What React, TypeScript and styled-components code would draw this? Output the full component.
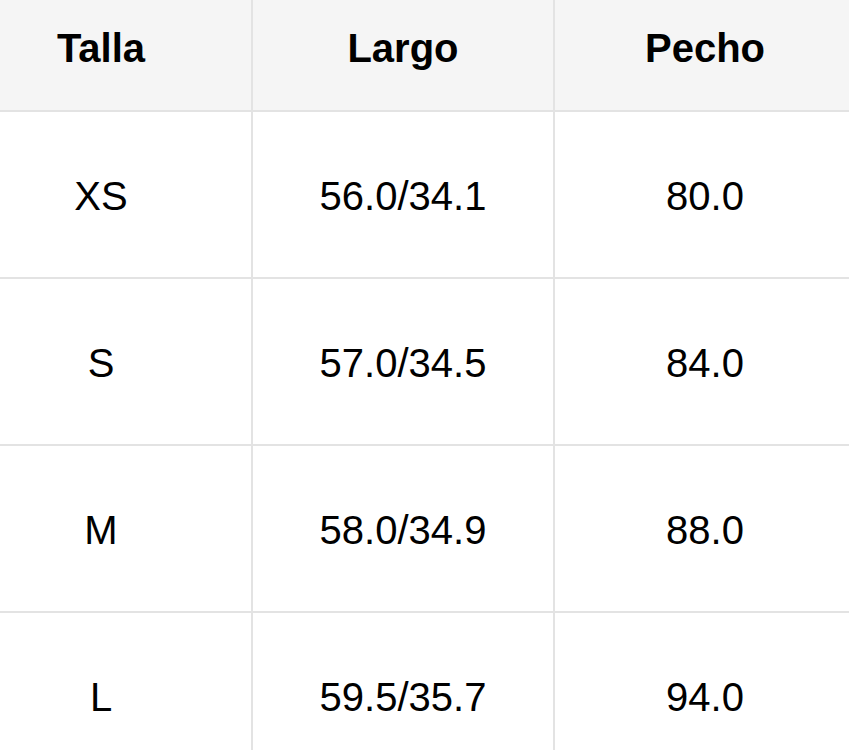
import React from "react";
import styled, { createGlobalStyle } from "styled-components";

const GlobalStyle = createGlobalStyle`
  html, body {
    margin: 0;
    padding: 0;
    background: #ffffff;
    overflow: hidden;
    font-family: "Liberation Sans", Arial, Helvetica, sans-serif;
  }
`;

const Viewport = styled.div`
  width: 849px;
  height: 750px;
  overflow: hidden;
  background: #ffffff;
`;

const Grid = styled.div`
  display: grid;
  grid-template-columns: repeat(3, 300px);
  grid-template-rows: 125px repeat(4, 165px);
  gap: 2px;
  padding: 2px;
  background: #e3e3e3;
  width: max-content;
  margin: -17px 0 0 -51px;
`;

const Cell = styled.div<{ $head?: boolean }>`
  display: flex;
  align-items: center;
  justify-content: center;
  box-sizing: border-box;
  padding-top: ${(p) => (p.$head ? "0" : "3px")};
  background: ${(p) => (p.$head ? "#f5f5f5" : "#ffffff")};
  color: #000000;
  font-size: 40px;
  font-weight: ${(p) => (p.$head ? 700 : 400)};
  line-height: 1;
`;

const headers = ["Talla", "Largo", "Pecho"];
const rows = [
  ["XS", "56.0/34.1", "80.0"],
  ["S", "57.0/34.5", "84.0"],
  ["M", "58.0/34.9", "88.0"],
  ["L", "59.5/35.7", "94.0"],
];

export default function App() {
  return (
    <>
      <GlobalStyle />
      <Viewport>
        <Grid>
          {headers.map((h) => (
            <Cell key={h} $head>
              {h}
            </Cell>
          ))}
          {rows.map((r) =>
            r.map((v, i) => <Cell key={r[0] + i}>{v}</Cell>)
          )}
        </Grid>
      </Viewport>
    </>
  );
}
